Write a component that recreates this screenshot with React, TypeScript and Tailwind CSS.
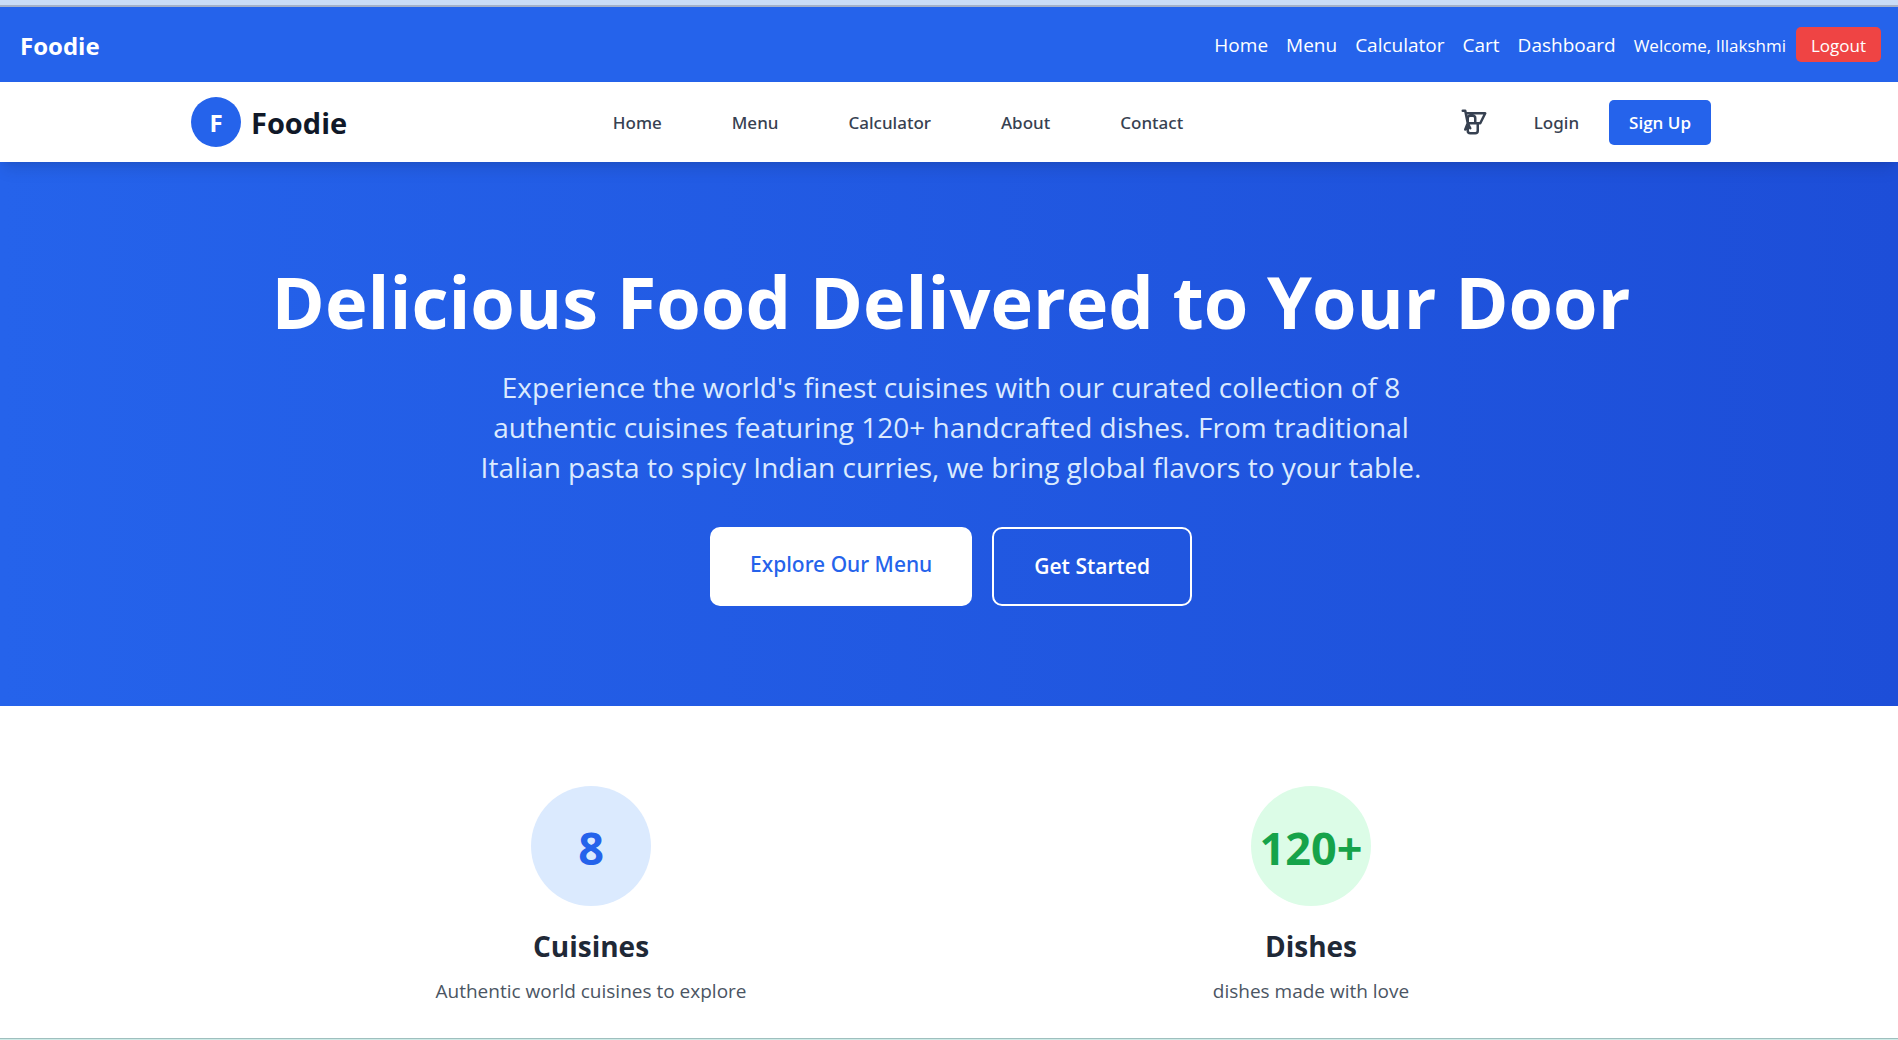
const topLinks = ["Home", "Menu", "Calculator", "Cart", "Dashboard"];
const mainLinks = ["Home", "Menu", "Calculator", "About", "Contact"];

function CartIcon() {
  return (
    <svg
      className="size-[30px]"
      viewBox="0 0 24 24"
      fill="none"
      stroke="currentColor"
      strokeWidth={2}
      strokeLinecap="round"
      strokeLinejoin="round"
      aria-hidden="true"
    >
      <path d="M3 3h2l.4 2M7 13h10l4-8H5.4M7 13L5.4 5M7 13l-2 5M7 13l2 4M15 13v6a2 2 0 01-2 2H9a2 2 0 01-2-2v-6m6 0V9a2 2 0 00-2-2H9a2 2 0 00-2 2v4" />
    </svg>
  );
}

function TopBar() {
  return (
    <nav aria-label="Account" className="flex h-[75px] items-center justify-between bg-[#2563eb] pl-5 pr-[17px] text-white">
      <a href="#" className="pt-0.5 text-[24px] font-bold">Foodie</a>
      <div className="flex items-center gap-[18px] text-[19px]">
        {topLinks.map((label) => (
          <a key={label} href="#" className="pt-0.5">{label}</a>
        ))}
        <div className="flex items-center gap-2.5 text-[17px]">
          <span className="pt-0.5">Welcome, Illakshmi</span>
          <button className="h-[35px] rounded-[5px] bg-[#ef4444] px-[15px] pt-0.5">Logout</button>
        </div>
      </div>
    </nav>
  );
}

function MainBar() {
  return (
    <header className="relative h-20 bg-white pl-1 shadow-lg">
      <div className="mx-auto flex h-full max-w-[1520px] items-center justify-between">
        <a href="#" className="flex items-center gap-2.5">
          <span className="flex size-[50px] items-center justify-center rounded-full bg-[#2563eb] pt-0.5 text-[24px] font-bold text-white">F</span>
          <span className="pt-0.5 text-[29px] font-bold text-gray-900">Foodie</span>
        </a>
        <nav aria-label="Main" className="flex items-center gap-[70px] pt-0.5 font-['Noto_Sans',sans-serif] text-[17px] font-medium text-[#374151]">
          {mainLinks.map((label) => (
            <a key={label} href="#">{label}</a>
          ))}
        </nav>
        <div className="flex items-center text-[17px] text-[#374151]">
          <button aria-label="Cart" className="mr-[35px] p-2.5"><CartIcon /></button>
          <a href="#" className="mr-[30px] pt-0.5 font-['Noto_Sans',sans-serif] font-medium">Login</a>
          <a href="#" className="flex h-[45px] items-center rounded-[5px] bg-[#2563eb] px-5 pt-0.5 font-semibold text-white">Sign Up</a>
        </div>
      </div>
    </header>
  );
}

function Hero() {
  return (
    <section className="flex flex-col items-center bg-[linear-gradient(90deg,#2563eb,#1d4ed8)] pt-[102px] pr-5 pb-[100px] pl-6 text-center text-white">
      <h1 className="mb-7 text-[72px] leading-[75px] font-bold">Delicious Food Delivered to Your Door</h1>
      <p className="mb-10 max-w-[960px] text-[28px] leading-10 text-[#dbeafe]">
        Experience the world's finest cuisines with our curated collection of 8
        authentic cuisines featuring 120+ handcrafted dishes. From traditional
        Italian pasta to spicy Indian curries, we bring global flavors to your table.
      </p>
      <div className="flex gap-5 text-[21px] leading-[35px]">
        <a href="#" className="rounded-[10px] bg-white px-10 pt-5 pb-6 font-['Noto_Sans',sans-serif] font-medium text-[#2563eb]">Explore Our Menu</a>
        <a href="#" className="rounded-[10px] border-2 border-white px-10 py-5 font-semibold">Get Started</a>
      </div>
    </section>
  );
}

function Stats() {
  return (
    <section className="pt-20 pl-1 text-center">
      <div className="mx-auto grid max-w-[1440px] grid-cols-2">
        <div className="flex flex-col items-center">
          <div className="mb-5 flex size-[120px] items-center justify-center rounded-full bg-[#dbeafe] pt-1 text-[45px] font-bold text-[#2563eb]">8</div>
          <h2 className="mb-2.5 text-[28px] leading-10 font-bold text-[#1f2937]">Cuisines</h2>
          <p className="text-[19px] leading-[30px] text-[#4b5563]">Authentic world cuisines to explore</p>
        </div>
        <div className="flex flex-col items-center">
          <div className="mb-5 flex size-[120px] items-center justify-center rounded-full bg-[#dcfce7] pt-1 text-[45px] font-bold text-[#16a34a]">120+</div>
          <h2 className="mb-2.5 text-[28px] leading-10 font-bold text-[#1f2937]">Dishes</h2>
          <p className="text-[19px] leading-[30px] text-[#4b5563]">dishes made with love</p>
        </div>
      </div>
    </section>
  );
}

export default function App() {
  return (
    <div className="flex min-h-screen flex-col bg-white font-['Open_Sans','Noto_Sans',sans-serif]">
      <div className="h-[7px] border-b-2 border-[#a3b1c9] bg-[#c9dcf6]" />
      <TopBar />
      <MainBar />
      <main className="grow">
        <Hero />
        <Stats />
      </main>
      <div className="h-0.5 border-t border-[#9fbfbe] bg-[#cdebe7]" />
    </div>
  );
}
